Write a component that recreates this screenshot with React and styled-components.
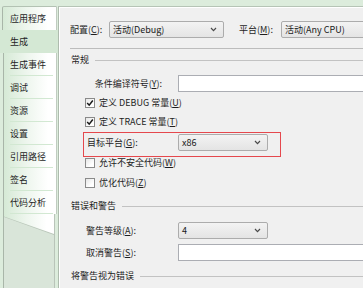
import React from 'react';
import styled, { createGlobalStyle } from 'styled-components';

const GlobalStyle = createGlobalStyle`
  html, body { margin: 0; padding: 0; }
  body {
    width: 363px;
    height: 288px;
    overflow: hidden;
    font-family: "Noto Sans CJK SC", "Noto Sans", sans-serif;
    font-size: 9px;
    line-height: 12px;
    color: #1e1e1e;
  }
`;

const Window = styled.div`
  display: flex;
  width: 363px;
  height: 288px;
  padding-top: 6px;
  box-sizing: border-box;
  background: #dcecdc;
  overflow: hidden;
`;

const Sidebar = styled.div`
  width: 58px;
  flex: none;
  display: flex;
  flex-direction: column;
`;

const tabFill = 'linear-gradient(to right, #d6ead6 0%, #eef6ee 45%, #ffffff 85%)';

const Tab = styled.div`
  position: relative;
  height: ${p => (p.$first ? 24 : 23)}px;
  display: flex;
  align-items: center;
  box-sizing: border-box;
  padding-left: ${p => (p.$selected ? 10 : p.$first ? 7 : 6)}px;
  margin-left: ${p => (p.$selected ? 0 : p.$first ? 2 : 3)}px;
  margin-right: ${p => (p.$selected ? 0 : 1)}px;
  background: ${p => (p.$selected ? '#d4e8d4' : tabFill)};
  border-left: ${p => (p.$selected ? 'none' : '1px solid #a9b6a9')};
  border-right: ${p => (p.$selected ? 'none' : '1px solid #c0cbc0')};
  border-top: ${p => (p.$first ? '1px solid #b3c2b3' : 'none')};
  border-radius: ${p => (p.$first ? '2px 0 0 0' : '0')};

  &::after {
    content: '';
    display: ${p => (p.$selected || p.$first ? 'none' : 'block')};
    position: absolute;
    left: 6px;
    right: 3px;
    bottom: 0;
    height: 1px;
    background: #d2e8d2;
  }
`;

const Tail = styled.div`
  position: relative;
  flex: 1;
  margin-left: 3px;
  margin-right: 3px;
  border-left: 1px solid #a9b6a9;
  border-right: 1px solid #b9c4b9;
  background: #d9e5d9;

  &::before {
    content: '';
    position: absolute;
    top: 0;
    left: 0;
    right: 0;
    height: 21px;
    background: #b9c6b9;
    clip-path: polygon(0 0, 100% 0, 100% 100%, 0 14%);
  }

  &::after {
    content: '';
    position: absolute;
    top: 0;
    left: 0;
    right: 0;
    height: 20px;
    background: ${tabFill};
    clip-path: polygon(0 0, 100% 0, 100% 100%, 0 12%);
  }
`;

const Panel = styled.div`
  flex: 1;
  min-width: 0;
  display: flex;
  flex-direction: column;
  padding-left: 11px;
  background: #f0f0f0;
  border-left: 1px solid #aebcae;
  border-top: 1px solid #b6c4b6;
  box-shadow: inset 1px 1px 0 #ffffff;
  overflow: hidden;
`;

const TopRow = styled.div`
  display: flex;
  align-items: center;
  height: 17px;
  margin-top: 14px;
`;

const TopLabel = styled.span`
  width: ${p => p.$w}px;
  flex: none;
  margin-left: ${p => p.$gap || 0}px;
`;

const Key = styled.span`
  text-decoration: underline;
  text-underline-offset: 1px;
`;

const Select = styled.div`
  width: ${p => p.$w}px;
  height: 17px;
  flex: none;
  box-sizing: border-box;
  display: flex;
  align-items: center;
  padding: 0 6px 0 3px;
  border: 1px solid #acacac;
  border-radius: 2px;
  background: linear-gradient(#f3f3f3, #e4e4e4);
  color: #1a1a1a;
`;

const Chevron = styled.svg`
  margin-left: auto;
  flex: none;
`;

const TextBox = styled.div`
  width: 220px;
  height: 17px;
  flex: none;
  box-sizing: border-box;
  background: #ffffff;
  border: 1px solid #abadb3;
`;

const Separator = styled.div`
  height: 1px;
  margin-top: 10px;
  background: #bcbcbc;
`;

const GroupHeader = styled.div`
  display: flex;
  align-items: center;
  height: 12px;
  margin-top: ${p => p.$top}px;
  padding-left: 1px;

  &::after {
    content: '';
    flex: 1;
    height: 1px;
    margin-left: 6px;
    background: #c2c2c2;
  }
`;

const FieldRow = styled.div`
  display: flex;
  align-items: center;
  height: 17px;
  margin-top: ${p => p.$top || 0}px;
  padding-left: ${p => (p.$inset ? 0 : 16)}px;
`;

const FieldLabel = styled.span`
  width: ${p => p.$w || 92}px;
  flex: none;
  box-sizing: border-box;
  text-align: ${p => (p.$right ? 'right' : 'left')};
  padding-right: ${p => (p.$right ? 16 : 0)}px;
`;

const Highlight = styled.div`
  width: 198px;
  height: 25px;
  box-sizing: border-box;
  margin-top: 4px;
  margin-left: 13px;
  padding: 1px 12px 5px 3px;
  border: 1px solid #e5484d;
`;

const CheckRow = styled.label`
  display: flex;
  align-items: center;
  gap: 4px;
  height: 12px;
  margin-top: ${p => p.$top}px;
  padding-left: 15px;
`;

const Box = styled.span`
  width: 10px;
  height: 10px;
  flex: none;
  box-sizing: border-box;
  display: flex;
  align-items: center;
  justify-content: center;
  border: 1px solid #8a8a8a;
  background: linear-gradient(135deg, #e6e6e6, #ffffff 70%);
`;

function Caret() {
  return (
    <Chevron width="7" height="5" viewBox="0 0 7 5">
      <path d="M1 1 L3.5 3.6 L6 1" fill="none" stroke="#4a4a4a" strokeWidth="1.2" />
    </Chevron>
  );
}

function Check({ checked, children }) {
  return (
    <>
      <Box>
        {checked && (
          <svg width="8" height="8" viewBox="0 0 8 8">
            <path d="M1.2 4 L3.2 6.2 L6.8 1.5" fill="none" stroke="#1a1a1a" strokeWidth="1.5" />
          </svg>
        )}
      </Box>
      <span>{children}</span>
    </>
  );
}

const tabs = ['应用程序', '生成', '生成事件', '调试', '资源', '设置', '引用路径', '签名', '代码分析'];

export default function App() {
  return (
    <>
      <GlobalStyle />
      <Window>
        <Sidebar>
          {tabs.map((t, i) => (
            <Tab key={t} $first={i === 0} $selected={i === 1}>{t}</Tab>
          ))}
          <Tail />
        </Sidebar>

        <Panel>
          <TopRow>
            <TopLabel $w={39}>配置(<Key>C</Key>):</TopLabel>
            <Select $w={115}>活动(Debug)<Caret /></Select>
            <TopLabel $w={42} $gap={15}>平台(<Key>M</Key>):</TopLabel>
            <Select $w={110}>活动(Any CPU)</Select>
          </TopRow>

          <Separator />

          <GroupHeader $top={5}>常规</GroupHeader>

          <FieldRow $top={9}>
            <FieldLabel $right>条件编译符号(<Key>Y</Key>):</FieldLabel>
            <TextBox />
          </FieldRow>

          <CheckRow $top={5}><Check checked>定义 DEBUG 常量(<Key>U</Key>)</Check></CheckRow>
          <CheckRow $top={7}><Check checked>定义 TRACE 常量(<Key>T</Key>)</Check></CheckRow>

          <Highlight>
            <FieldRow $inset>
              <FieldLabel $w={91}>目标平台(<Key>G</Key>):</FieldLabel>
              <Select $w={90}>x86<Caret /></Select>
            </FieldRow>
          </Highlight>

          <CheckRow $top={0}><Check>允许不安全代码(<Key>W</Key>)</Check></CheckRow>
          <CheckRow $top={8}><Check>优化代码(<Key>Z</Key>)</Check></CheckRow>

          <GroupHeader $top={11}>错误和警告</GroupHeader>

          <FieldRow $top={10}>
            <FieldLabel>警告等级(<Key>A</Key>):</FieldLabel>
            <Select $w={90}>4<Caret /></Select>
          </FieldRow>

          <FieldRow $top={5}>
            <FieldLabel>取消警告(<Key>S</Key>):</FieldLabel>
            <TextBox />
          </FieldRow>

          <GroupHeader $top={9}>将警告视为错误</GroupHeader>
        </Panel>
      </Window>
    </>
  );
}
